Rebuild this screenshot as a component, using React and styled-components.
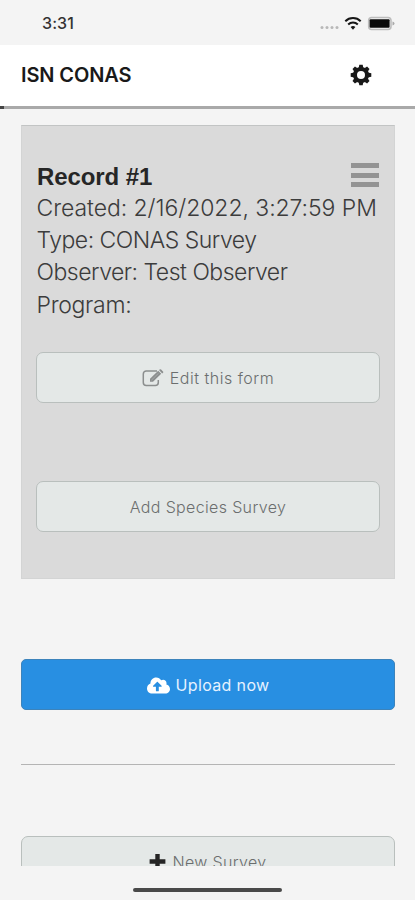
import React from "react";
import styled, { createGlobalStyle } from "styled-components";
import { FaCloudUploadAlt } from "react-icons/fa";

const GlobalStyle = createGlobalStyle`
    * {
        box-sizing: border-box;
    }
    body {
        margin: 0;
        background: #f4f4f4;
        font-family: Inter, "Liberation Sans", sans-serif;
    }
`

const Screen = styled.div`
    width: 415px;
    height: 900px;
    display: flex;
    flex-direction: column;
    overflow: hidden;
    background: #f4f4f4;
`
const StatusBar = styled.div`
    height: 45px;
    flex: none;
    display: flex;
    align-items: center;
    justify-content: space-between;
    padding: 1px 20px 0 42px;
`
const Clock = styled.span`
    font-size: 16px;
    font-weight: 500;
    line-height: 20px;
    letter-spacing: 0.1px;
    color: #333;
`
const Header = styled.header`
    height: 61px;
    flex: none;
    display: flex;
    align-items: center;
    justify-content: space-between;
    padding: 0 43px 1px 21px;
    background: #fff;
    color: #191919;
`
const Title = styled.h1`
    margin: 0;
    font-size: 20px;
    font-weight: 600;
    line-height: 24px;
    letter-spacing: -0.1px;
`
const Progress = styled.div`
    height: 3px;
    flex: none;
    background: #a9a9a9;
`
const ProgressDone = styled.div`
    width: 4px;
    height: 3px;
    background: #444;
`
const Content = styled.main`
    height: 757px;
    flex: none;
    overflow: hidden;
    padding: 16px 20px 0 21px;
`
const Card = styled.section`
    height: 454px;
    padding: 35px 14px 0;
    background: #dadada;
    border: 1px solid #d3d4d4;
    border-top-color: #c2c4c4;
`
const CardTop = styled.div`
    display: flex;
    justify-content: space-between;
    padding: 0 1px;
`
const RecordName = styled.h2`
    margin: 0;
    font-family: "Liberation Sans", Arial, sans-serif;
    font-size: 24px;
    font-weight: 700;
    line-height: 31px;
    letter-spacing: -0.1px;
    color: #262626;
`
const MenuButton = styled.div`
    width: 28px;
    height: 24px;
    margin-top: 2px;
    display: flex;
    flex-direction: column;
    justify-content: space-between;
`
const MenuLine = styled.span`
    height: 5px;
    background: #949494;
`
const Line = styled.p`
    margin: 0;
    padding-left: 0.5px;
    font-size: 23px;
    font-weight: 300;
    line-height: 32.2px;
    white-space: nowrap;
    letter-spacing: ${(props) => props.$spacing || "-0.5px"};
    color: #3c3c3c;
`
const Button = styled.div`
    height: 51px;
    margin-top: ${(props) => props.$top};
    padding-top: 1px;
    display: flex;
    align-items: center;
    justify-content: center;
    gap: 6px;
    border-radius: ${(props) => (props.$primary ? "5px" : "7px")};
    border: 1px solid ${(props) => (props.$primary ? "#3c83bb" : "#b9bfbd")};
    background: ${(props) => (props.$primary ? "#288fe2" : "#e4e8e7")};
    color: ${(props) => (props.$primary ? "#e6f2ff" : "#6b6e6e")};
    font-size: 16px;
    font-weight: ${(props) => (props.$primary ? 400 : 300)};
    letter-spacing: ${(props) => props.$spacing || "0.35px"};
`
const Divider = styled.hr`
    height: 1px;
    margin: 54px 0 0;
    border: 0;
    background: #b4b4b4;
`
const HomeBar = styled.div`
    width: 149px;
    height: 4px;
    margin: 22px 0 0 133px;
    border-radius: 2px;
    background: #4a4a4a;
`

const StatusIcons = () => (
    <svg width="75" height="20" viewBox="0 0 75 20">
        <g fill="#b8b8b8">
            <circle cx="2" cy="14.5" r="1.5" />
            <circle cx="7" cy="14.5" r="1.5" />
            <circle cx="12" cy="14.5" r="1.5" />
            <circle cx="17" cy="14.5" r="1.5" />
        </g>
        <g fill="none" stroke="#161616" strokeWidth="2">
            <path d="M25.3 8.2a11 11 0 0 1 15.4 0" />
            <path d="M28.2 11.4a7 7 0 0 1 9.6 0" />
        </g>
        <path d="M30.6 13.9a4 4 0 0 1 4.8 0L33 16.7z" fill="#161616" />
        <rect x="48.7" y="4.5" width="22.3" height="12" rx="3" fill="#f4f4f4" stroke="#bdbdbd" strokeWidth="1.6" />
        <rect x="49.6" y="6.2" width="20" height="8.6" rx="1" fill="#0b0b0b" />
        <path d="M72.5 8.4q2 .5 2 2t-2 2z" fill="#aaa" />
    </svg>
)

const GearIcon = () => (
    <svg width="22" height="22" viewBox="-11 -11 22 22">
        <circle r="6" fill="none" stroke="#191919" strokeWidth="4" />
        {[0, 45, 90, 135, 180, 225, 270, 315].map((angle) => (
            <path key={angle} d="M-2.4-6.8L-1.7-10.3H1.7L2.4-6.8z" fill="#191919" transform={`rotate(${angle})`} />
        ))}
    </svg>
)

const EditIcon = () => (
    <svg width="22" height="18" viewBox="0 0 22 18" fill="none" stroke="#8b8e8e">
        <path d="M15 2H4.3A3 3 0 0 0 1.3 5v8.4a3 3 0 0 0 3 3h9a3 3 0 0 0 3-3V11" strokeWidth="1.5" />
        <path d="M8 9.8L16.2 1.8 19.2 4.8 11 12.8H8z" fill="#8b8e8e" stroke="none" />
        <path d="M9.3 11.3L16.6 4.2" stroke="#b5b9b8" strokeWidth="0.6" />
        <path d="M17 1l.7-.6q.7-.5 1.4.2l1.9 1.9q.6.7 0 1.3l-.8.8z" fill="#8b8e8e" stroke="none" />
    </svg>
)

const PlusIcon = () => (
    <svg width="17" height="17" viewBox="0 0 17 17">
        <path d="M6.3 0h4.4v5.3h5.7v4.4h-5.7v5.3H6.3V9.7H.6V5.3h5.7z" fill="#252525" />
    </svg>
)

function App() {
    return (
        <Screen>
            <GlobalStyle />
            <StatusBar>
                <Clock>3:31</Clock>
                <StatusIcons />
            </StatusBar>
            <Header>
                <Title>ISN CONAS</Title>
                <GearIcon />
            </Header>
            <Progress>
                <ProgressDone />
            </Progress>
            <Content>
                <Card>
                    <CardTop>
                        <RecordName>Record #1</RecordName>
                        <MenuButton>
                            <MenuLine />
                            <MenuLine />
                            <MenuLine />
                        </MenuButton>
                    </CardTop>
                    <Line $spacing="-0.07px">Created: 2/16/2022, 3:27:59 PM</Line>
                    <Line>Type: CONAS Survey</Line>
                    <Line>Observer: Test Observer</Line>
                    <Line $spacing="-0.3px">Program:</Line>
                    <Button $top="31px" $spacing="0.5px">
                        <EditIcon />
                        Edit this form
                    </Button>
                    <Button $top="78px">Add Species Survey</Button>
                </Card>
                <Button $primary $top="80px">
                    <FaCloudUploadAlt size={23} color="#fff" />
                    Upload now
                </Button>
                <Divider />
                <Button $top="71px">
                    <PlusIcon />
                    New Survey
                </Button>
            </Content>
            <HomeBar />
        </Screen>
    );
}

export default App;
